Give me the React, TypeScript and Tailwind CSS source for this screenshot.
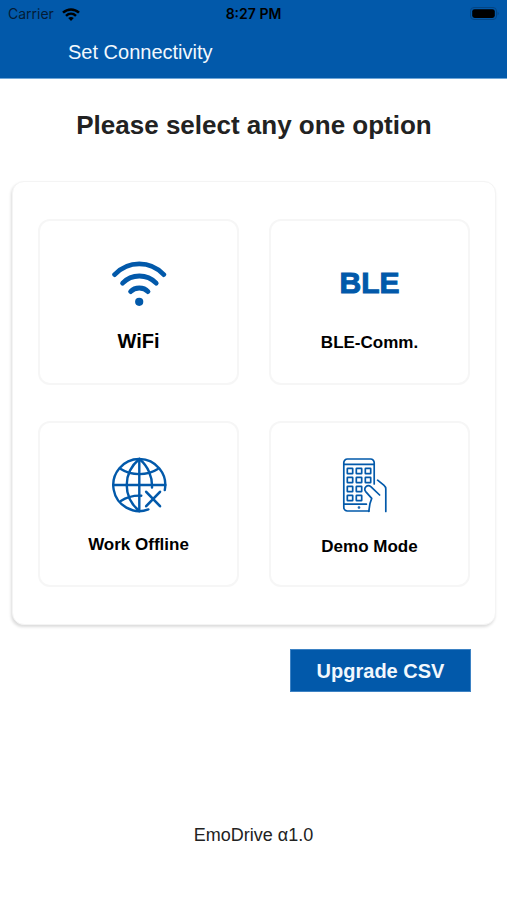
/**
 * Connectivity screen: the user picks how the app reaches the drive.
 */
import type { ReactNode } from 'react'

const KEY_COLS = [8, 17, 26]
const KEY_ROWS = [14, 23, 32, 41]

function WifiIcon() {
  return (
    <svg viewBox="0 0 56 56" className="size-14" fill="none" stroke="currentColor" strokeWidth="4.8" strokeLinecap="round" aria-hidden="true">
      <path d="M3.6 19.6C17.5 5.4 39.1 5.4 52.8 19.6" />
      <path d="M11.6 28.2C20.7 18.6 36 18.6 45.2 28.2" />
      <path d="M19.6 36.6C24 31.8 32.6 31.8 37 36.6" />
      <circle cx="28.2" cy="46.8" r="4.1" fill="currentColor" stroke="none" />
    </svg>
  )
}

function OfflineIcon() {
  return (
    <svg viewBox="0 0 56 56" className="size-14" fill="none" stroke="currentColor" strokeWidth="2.4" strokeLinecap="round" aria-hidden="true">
      {/* Globe, open where the cross stands */}
      <path d="M53.8 33A26 26 0 1 0 37.4 52.4" />
      <path d="M28.3 2v52M2.3 28h52" />
      <path d="M28.3 2C11.5 16 11.5 40 28.3 54M28.3 2C37 9 41.6 20 41 30.6" />
      <path d="M9.8 12c10.5 6.8 26.5 6.8 37 0M9.8 44c6-4 13-5.6 20.5-5.3" />
      <path d="M35.2 34.8l13.8 14.4M49 34.8L35.2 49.2" strokeWidth="2.6" />
    </svg>
  )
}

function DemoIcon() {
  return (
    <svg viewBox="0 0 56 56" className="size-14" fill="none" stroke="currentColor" strokeWidth="1.7" strokeLinecap="round" strokeLinejoin="round" aria-hidden="true">
      <path d="M32.2 27V5.6A3.6 3.6 0 0 0 28.6 2H5.4a3.6 3.6 0 0 0-3.6 3.6v44.8A3.6 3.6 0 0 0 5.4 54H27" />
      <path d="M1.8 7.4h30.4M1.8 47.2h22.6" />
      {KEY_ROWS.map((y, row) =>
        KEY_COLS.filter((_, col) => row < 3 || col < 2).map((x) =>
          // The thumb covers the key at the end of the third row
          row === 2 && x === 26 ? null : (
            <rect key={`${x}-${y}`} x={x - 2.7} y={y - 2.7} width="5.4" height="5.4" rx="0.4" />
          ),
        ),
      )}
      <path d="M37.6 38l-8.5-8.2c-3.8-3-8 1.2-5.4 4.8l6 6.8-1.8 5.4L26.8 54.4" />
      <path d="M35.6 23.2l6.2 5c1.4 1.2 2 2 2 3.6v22.6" />
      <circle cx="17" cy="50.5" r="0.5" />
    </svg>
  )
}

function OptionTile({ label, labelClass, children }: { label: string; labelClass: string; children: ReactNode }) {
  return (
    <button type="button" className="flex h-[166px] flex-col items-center rounded-xl border-2 border-[#f6f6f6] bg-white pt-[34px]">
      <span className="flex h-14 items-center justify-center text-[#0259aa]">{children}</span>
      <span className={`leading-7 font-bold text-black ${labelClass}`}>{label}</span>
    </button>
  )
}

function StatusBar() {
  return (
    <div className="grid h-7 grid-cols-3 items-center px-2 font-[Inter,sans-serif] text-sm text-[#041c36]">
      <div className="flex items-center gap-2">
        <span>Carrier</span>
        <svg viewBox="0 0 18 13" className="h-[13px] w-[18px]" fill="none" stroke="#000" strokeWidth="2.5" aria-hidden="true">
          <path d="M1 4.7C5.6.4 12.4.4 17 4.7M4 7.8c3-2.8 7-2.8 10 0" />
          <path d="M6.2 10Q9 7.8 11.8 10L9 13z" fill="#000" stroke="none" />
        </svg>
      </div>
      <span className="text-center font-semibold text-black">8:27 PM</span>
      <svg viewBox="0 0 30 14" className="h-[14px] w-[30px] justify-self-end" aria-hidden="true">
        <rect x="1.5" y="0.5" width="26" height="12" rx="3.5" fill="none" stroke="#044583" />
        <rect x="3.2" y="2.2" width="22.6" height="8.8" rx="2.4" fill="#000" />
        <path d="M28.6 4.5q2 2 0 4z" fill="#044583" />
      </svg>
    </div>
  )
}

export default function App() {
  return (
    <div className="min-h-screen bg-white font-['Liberation_Sans',Arial,sans-serif]">
      <header className="border-b border-[#6ea6d8] bg-[#0259aa]">
        <StatusBar />
        <p className="h-[50px] pl-[68px] text-xl leading-12 text-[#f2f8fd]">Set Connectivity</p>
      </header>

      <main className="flex flex-col pr-[11px] pl-3">
        <h1 className="mt-7 text-center text-[26px] leading-9 font-bold text-[#222]">Please select any one option</h1>

        <div className="mt-[38px] grid grid-cols-2 gap-x-[30px] gap-y-9 rounded-xl border border-[#f4f4f4] bg-white px-[25px] py-[37px] shadow-[-1px_2px_3px_rgba(0,0,0,0.14)]">
          <OptionTile label="WiFi" labelClass="mt-4 text-xl">
            <WifiIcon />
          </OptionTile>
          <OptionTile label="BLE-Comm." labelClass="mt-[18px] text-[17px]">
            <span className="text-3xl font-bold [-webkit-text-stroke:1px_#0259aa]">BLE</span>
          </OptionTile>
          <OptionTile label="Work Offline" labelClass="mt-[18px] text-[17px]">
            <OfflineIcon />
          </OptionTile>
          <OptionTile label="Demo Mode" labelClass="mt-5 text-[17px]">
            <DemoIcon />
          </OptionTile>
        </div>

        <button type="button" className="mt-6 mr-[25px] h-[43px] w-[181px] self-end border border-[#3d82c4] bg-[#0259aa] text-xl font-bold text-[#f2f8fd]">
          Upgrade CSV
        </button>
      </main>

      <footer className="mt-[129px] text-center text-lg leading-7 text-[#222]">EmoDrive α1.0</footer>
    </div>
  )
}
